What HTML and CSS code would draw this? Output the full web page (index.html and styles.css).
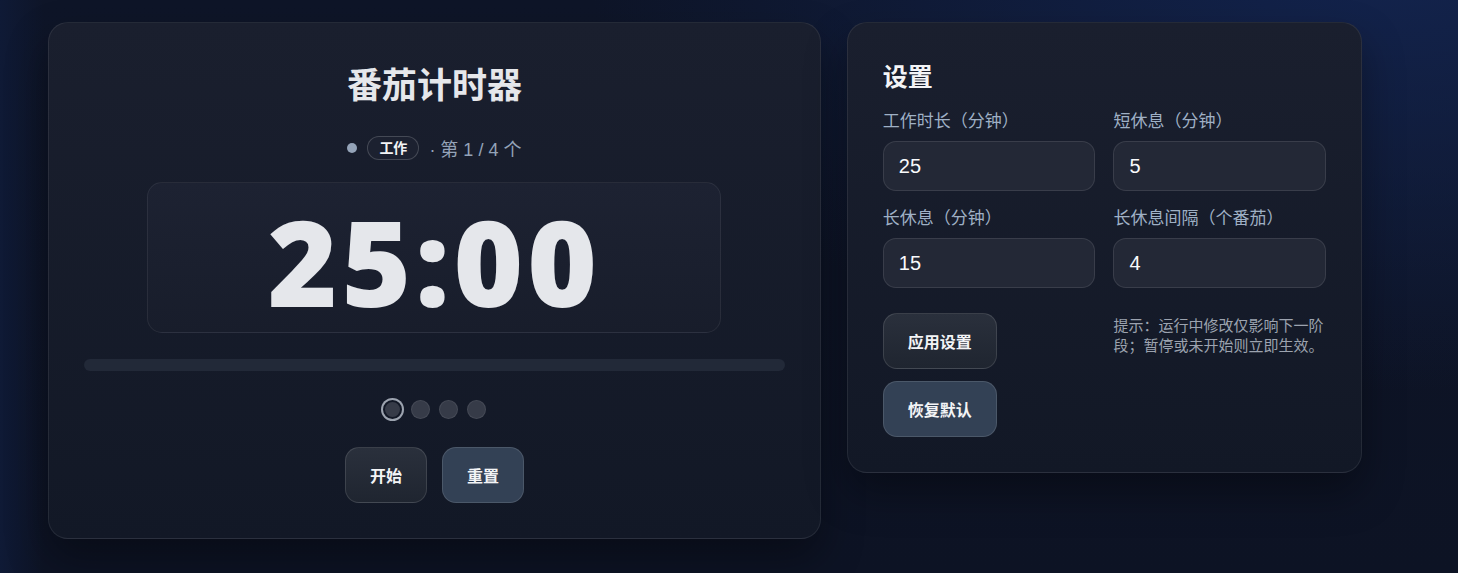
FILE: index.html
```html
<!DOCTYPE html>
<html lang="zh-CN">
<head>
  <meta charset="UTF-8"/>
  <meta name="viewport" content="width=device-width, initial-scale=1.0"/>
  <title>番茄计时器</title>
  <link rel="stylesheet" href="styles.css">
</head>
<body>
  <div class="layout">
    <section class="card timer-card">
      <h1>番茄计时器</h1>

      <div class="status">
        <span class="status-dot"></span>
        <span class="phase-badge">工作</span>
        <span class="round">· 第 1 / 4 个</span>
      </div>

      <div class="timer-box">
        <div class="time">25:00</div>
      </div>

      <div class="progress"><div class="progress-fill" style="width: 0%"></div></div>

      <div class="dots">
        <span class="dot current"></span>
        <span class="dot"></span>
        <span class="dot"></span>
        <span class="dot"></span>
      </div>

      <div class="controls">
        <button class="btn">开始</button>
        <button class="btn btn-alt">重置</button>
      </div>
    </section>

    <section class="card settings-card">
      <h2>设置</h2>
      <div class="settings-grid">
        <label class="field">
          <span>工作时长（分钟）</span>
          <input type="number" value="25"/>
        </label>
        <label class="field">
          <span>短休息（分钟）</span>
          <input type="number" value="5"/>
        </label>
        <label class="field">
          <span>长休息（分钟）</span>
          <input type="number" value="15"/>
        </label>
        <label class="field">
          <span>长休息间隔（个番茄）</span>
          <input type="number" value="4"/>
        </label>

        <div class="settings-actions">
          <button class="btn">应用设置</button>
          <button class="btn btn-alt">恢复默认</button>
        </div>
        <p class="hint">提示：运行中修改仅影响下一阶段；暂停或未开始则立即生效。</p>
      </div>
    </section>
  </div>
</body>
</html>
```

FILE: styles.css
```css
* {
  box-sizing: border-box;
}

body {
  margin: 0;
  min-height: 100vh;
  font-family: "Liberation Sans", "Noto Sans CJK SC", sans-serif;
  color: #e5e7eb;
  background:
    radial-gradient(1000px 560px at 95% -10%, #13244f 0%, rgba(19, 36, 79, 0) 80%),
    linear-gradient(90deg, #0f1a36 0%, rgba(15, 26, 54, 0) 3%),
    linear-gradient(180deg, #0e1528 0%, #0d1324 100%);
}

.layout {
  display: grid;
  grid-template-columns: minmax(0, 1.5fr) minmax(0, 1fr);
  gap: 26px;
  max-width: 1314px;
  margin: 0 0 0 48px;
  padding-top: 22px;
  align-items: start;
}

.card {
  background: linear-gradient(180deg, #1a1f2e 0%, #121826 100%);
  border: 1px solid rgba(255, 255, 255, 0.08);
  border-radius: 20px;
  box-shadow: 0 20px 40px rgba(0, 0, 0, 0.35);
  padding: 35px;
}

/* timer */

.timer-card {
  display: flex;
  flex-direction: column;
  align-items: center;
  padding-top: 40px;
}

h1 {
  margin: 0;
  font-size: 35px;
  line-height: 46px;
  font-weight: 700;
}

.status {
  display: flex;
  align-items: center;
  gap: 10px;
  margin-top: 26px;
  font-size: 18px;
  color: #94a3b8;
}

.status-dot {
  width: 10px;
  height: 10px;
  border-radius: 50%;
  background: #94a3b8;
}

.phase-badge {
  padding: 2px 11px;
  border: 1px solid rgba(255, 255, 255, 0.18);
  border-radius: 999px;
  background: #1c2130;
  color: #f3f4f6;
  font-size: 14px;
  font-weight: 700;
  line-height: 18px;
}

.timer-box {
  width: 574px;
  margin-top: 21px;
  height: 151px;
  display: flex;
  align-items: center;
  justify-content: center;
  background: linear-gradient(180deg, #1d2232 0%, #181d2b 100%);
  border: 1px solid rgba(255, 255, 255, 0.07);
  border-radius: 15px;
}

.time {
  font-family: "Open Sans", sans-serif;
  font-size: 119px;
  font-weight: 800;
  line-height: 1;
  letter-spacing: 4px;
  margin-top: 8px;
  color: #e5e7eb;
}

.progress {
  align-self: stretch;
  height: 12px;
  margin-top: 26px;
  border-radius: 6px;
  background: #222938;
  overflow: hidden;
}

.progress-fill {
  height: 100%;
  background: #ef4444;
}

.dots {
  display: flex;
  gap: 9px;
  margin-top: 29px;
}

.dot {
  width: 19px;
  height: 19px;
  border-radius: 50%;
  background: #363b48;
  border: 1px solid rgba(255, 255, 255, 0.08);
}

.dot.current {
  box-shadow: 0 0 0 2px #9ca3af;
  border: 2px solid #121826;
}

.controls {
  display: flex;
  gap: 15px;
  margin-top: 28px;
}

.btn {
  height: 56px;
  padding: 0 24px;
  border-radius: 14px;
  border: 1px solid rgba(255, 255, 255, 0.12);
  background: linear-gradient(180deg, #2a303c 0%, #1f2530 100%);
  color: #f3f4f6;
  font-family: "Liberation Sans", "Noto Sans CJK SC", sans-serif;
  font-size: 16px;
  font-weight: 700;
  cursor: pointer;
}

.btn-alt {
  background: #334155;
}

/* settings */

h2 {
  margin: 0;
  margin-top: 1px;
  font-size: 25px;
  line-height: 36px;
  font-weight: 700;
  color: #f3f4f6;
}

.settings-grid {
  display: grid;
  grid-template-columns: minmax(0, 1fr) minmax(0, 1fr);
  column-gap: 18px;
  row-gap: 16px;
  margin-top: 15px;
}

.field {
  display: flex;
  flex-direction: column;
  gap: 7px;
}

.field span {
  font-size: 17px;
  line-height: 24px;
  color: #9fb0c5;
}

.field input {
  width: 100%;
  min-width: 0;
  height: 50px;
  padding: 0 15px;
  border-radius: 13px;
  border: 1px solid rgba(255, 255, 255, 0.1);
  background: #232836;
  color: #f8fafc;
  font-family: "Liberation Sans", sans-serif;
  font-size: 20px;
  outline: none;
  -moz-appearance: textfield;
}

.field input::-webkit-outer-spin-button,
.field input::-webkit-inner-spin-button {
  -webkit-appearance: none;
  margin: 0;
}

.settings-actions {
  display: flex;
  flex-direction: column;
  align-items: flex-start;
  gap: 12px;
  margin-top: 9px;
}

.hint {
  margin: 12px 0 0;
  font-size: 15px;
  line-height: 20px;
  color: #9ca3af;
}
```
